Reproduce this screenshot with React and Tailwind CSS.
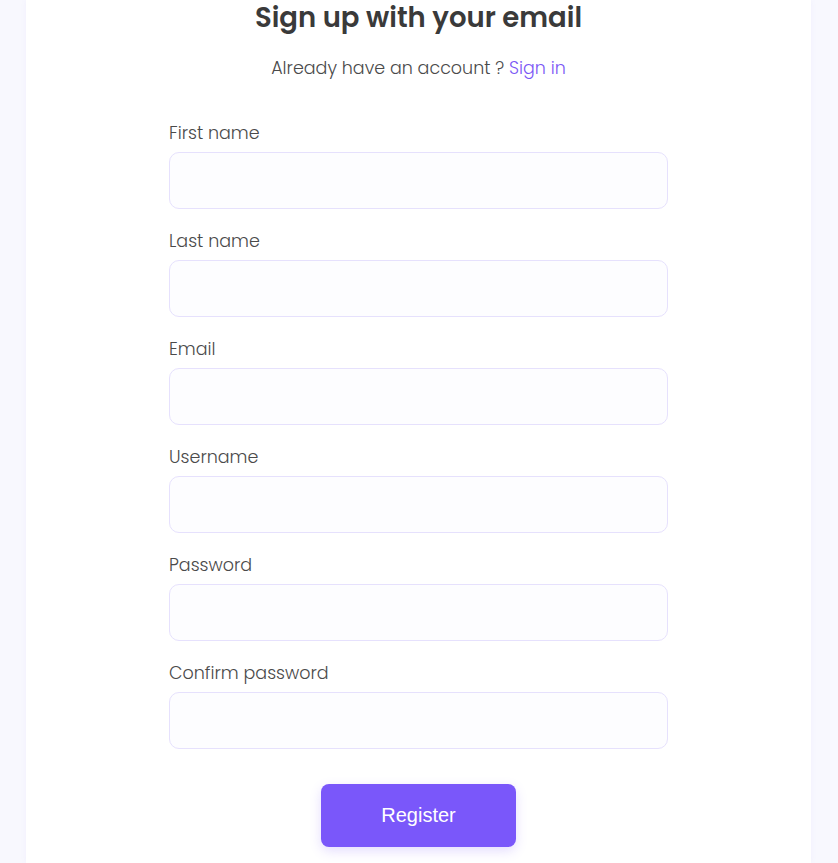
import { useState } from "react";

const fields = [
  { id: "firstName", label: "First name", type: "text" },
  { id: "lastName", label: "Last name", type: "text" },
  { id: "email", label: "Email", type: "email" },
  { id: "username", label: "Username", type: "text" },
  { id: "password", label: "Password", type: "password" },
  { id: "confirmPassword", label: "Confirm password", type: "password" },
];

export default function App() {
  const [form, setForm] = useState({});

  const handleChange = (e) => {
    setForm({ ...form, [e.target.name]: e.target.value });
  };

  return (
    <div className="min-h-[863px] bg-[#f8f8fe] pl-[26px] pr-[27px] font-['Poppins','Open_Sans',sans-serif]">
      <div className="bg-white min-h-[863px] shadow-[0_0_6px_rgba(120,100,240,0.06)]">
        <h1 className="text-center text-[27.5px] leading-[36px] font-semibold text-[#3a3a3a]">
          Sign up with your email
        </h1>
        <p className="mt-5 text-center text-[17.5px] leading-6 font-light text-[#4a4a4a]">
          Already have an account ? <a href="#" className="text-[#7b57f5]">Sign in</a>
        </p>

        <form className="mx-auto mt-[41px] w-[499px]" onSubmit={(e) => e.preventDefault()}>
          {fields.map((f) => (
            <div key={f.id} className="mb-5">
              <label htmlFor={f.id} className="block mb-[7px] text-[17.5px] leading-6 font-light text-[#4a4a4a]">
                {f.label}
              </label>
              <input
                id={f.id}
                name={f.id}
                type={f.type}
                value={form[f.id] || ""}
                onChange={handleChange}
                className="block w-full h-[57px] rounded-[10px] border border-[#e6e1fd] bg-[#fdfdff] px-4 outline-none"
              />
            </div>
          ))}
          <div className="flex justify-center pt-[15px]">
            <button
              type="submit"
              className="w-[195px] h-[63px] rounded-lg bg-[#7a57fa] pb-0.5 text-white text-[20px] font-['Liberation_Sans',Arial,sans-serif] shadow-[0_4px_12px_rgba(122,87,250,0.2)]"
            >
              Register
            </button>
          </div>
        </form>
      </div>
    </div>
  );
}
